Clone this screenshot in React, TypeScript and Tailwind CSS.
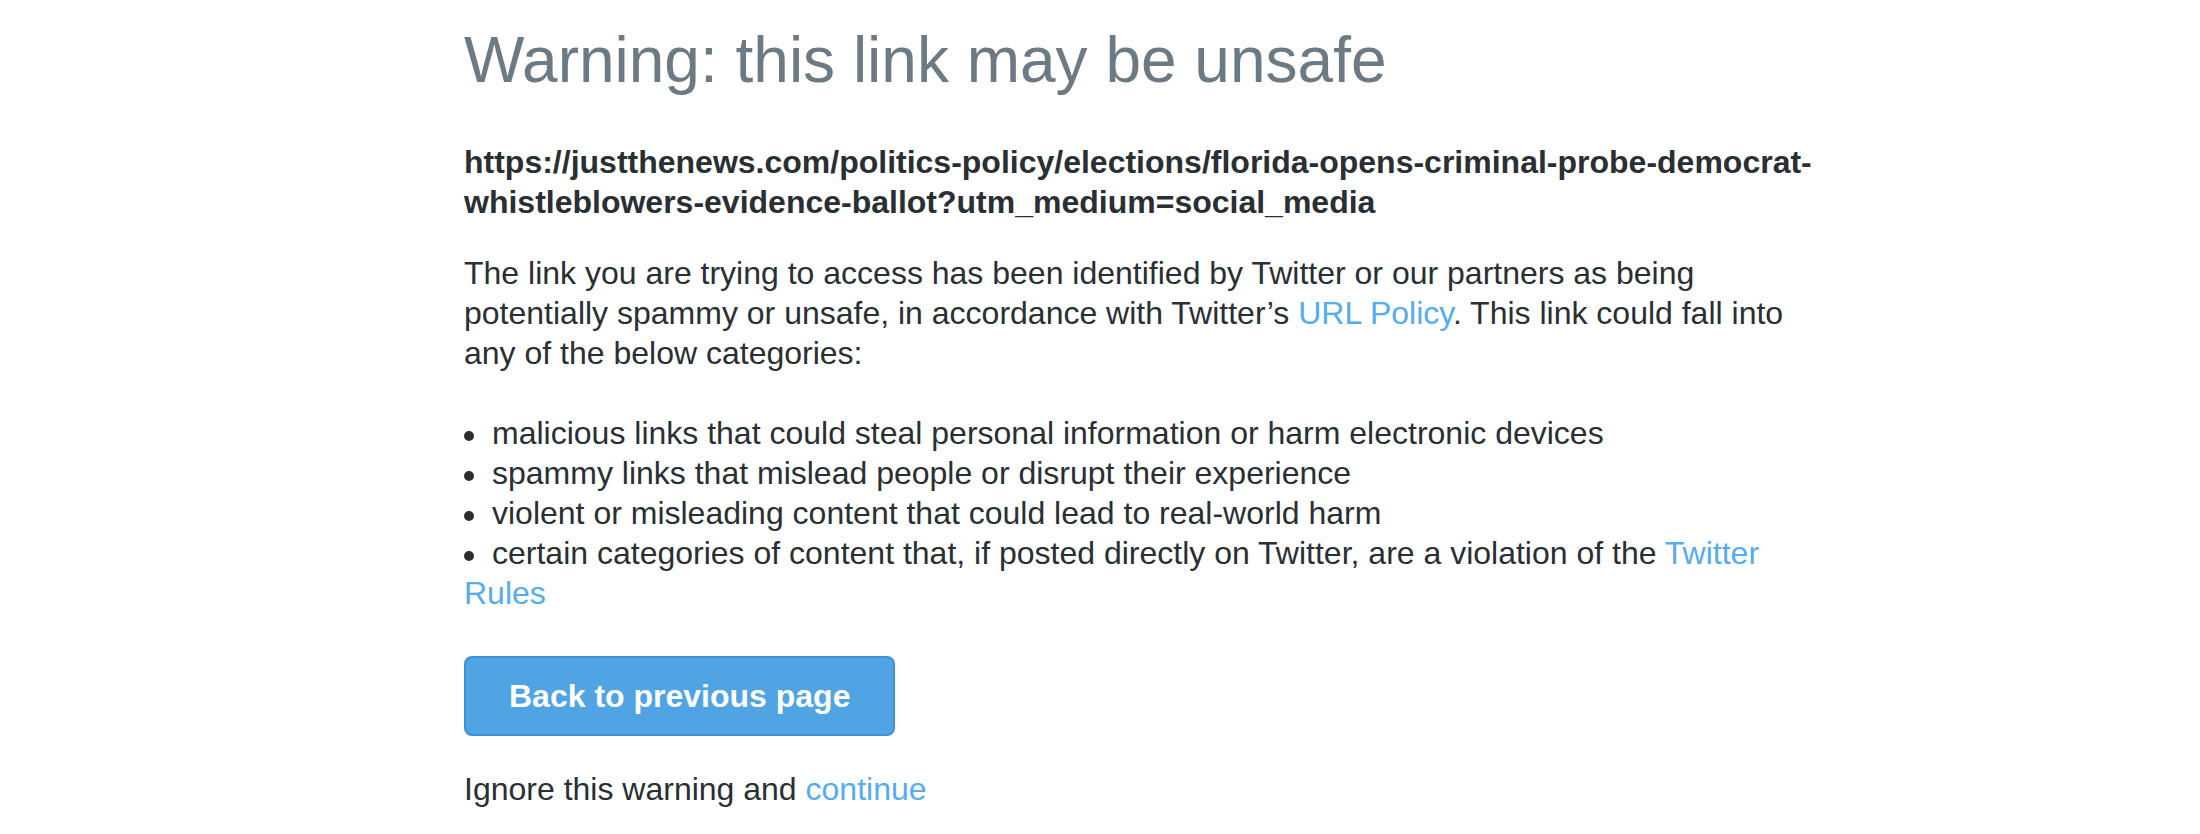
import React from 'react';

const categories = [
    'malicious links that could steal personal information or harm electronic devices',
    'spammy links that mislead people or disrupt their experience',
    'violent or misleading content that could lead to real-world harm',
];

// Inline dot so that wrapped lines return to the left edge
const Dot = () => (
    <span className="inline-block w-[10px] h-[10px] rounded-full bg-[#292f33] mr-[18px] align-middle" />
);

export default function App() {
    return (
        <div className="min-h-screen bg-white font-['Liberation_Sans',Arial,sans-serif] text-[#292f33]">
            <div className="ml-[464px] w-[1360px] pt-[24px]">
                {/* Title */}
                <h1 className="text-[64px] leading-[72px] font-normal text-[#6c7a84]">
                    Warning: this link may be unsafe
                </h1>

                {/* Flagged URL */}
                <p className="mt-[46px] text-[32px] leading-[40px] font-bold break-words">
                    https://justthenews.com/politics-policy/elections/florida-opens-criminal-probe-democrat-whistleblowers-evidence-ballot?utm_medium=social_media
                </p>

                <p className="mt-[31px] text-[32px] leading-[40px]">
                    The link you are trying to access has been identified by Twitter or our partners as being potentially spammy or unsafe, in accordance with Twitter’s{' '}
                    <a href="#" className="text-[#55acee]">URL Policy</a>. This link could fall into any of the below categories:
                </p>

                <ul className="mt-[40px] text-[32px] leading-[40px]">
                    {categories.map((c) => (
                        <li key={c}>
                            <Dot />
                            {c}
                        </li>
                    ))}
                    <li>
                        <Dot />
                        certain categories of content that, if posted directly on Twitter, are a violation of the{' '}
                        <a href="#" className="text-[#55acee]">Twitter Rules</a>
                    </li>
                </ul>

                <button className="mt-[43px] h-[80px] px-[43px] rounded-lg border-2 border-[#3c91d7] bg-[#50a4e4] text-white text-[32px] font-bold">
                    Back to previous page
                </button>

                <p className="mt-[33px] text-[32px] leading-[40px]">
                    Ignore this warning and <a href="#" className="text-[#55acee]">continue</a>
                </p>
            </div>
        </div>
    );
}
